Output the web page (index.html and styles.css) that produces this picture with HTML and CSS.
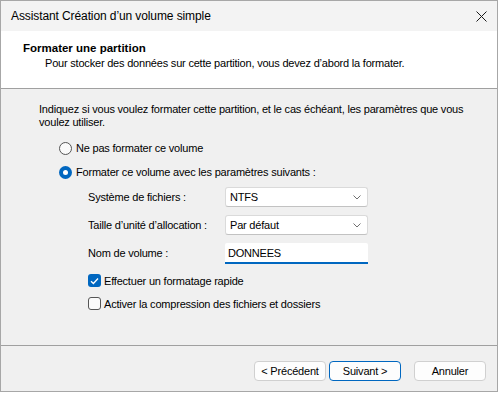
FILE: index.html
```html
<!DOCTYPE html>
<html lang="fr">
<head>
<meta charset="utf-8">
<link rel="stylesheet" href="styles.css">
</head>
<body>
<div class="window">
  <div class="titlebar">
    <span class="title">Assistant Création d’un volume simple</span>
    <svg class="close" width="11" height="11" viewBox="0 0 11 11"><path d="M0.5 0.5L10.5 10.5M10.5 0.5L0.5 10.5" stroke="#1a1a1a" stroke-width="1" fill="none"/></svg>
  </div>
  <div class="header">
    <div class="h-title">Formater une partition</div>
    <div class="h-sub">Pour stocker des données sur cette partition, vous devez d’abord la formater.</div>
  </div>
  <div class="content">
    <p class="intro">Indiquez si vous voulez formater cette partition, et le cas échéant, les paramètres que vous voulez utiliser.</p>
    <div class="radio-row first"><span class="radio"></span><span>Ne pas formater ce volume</span></div>
    <div class="radio-row"><span class="radio on"></span><span>Formater ce volume avec les paramètres suivants :</span></div>
    <div class="fields">
      <div class="field"><span class="label">Système de fichiers :</span><div class="select"><span>NTFS</span><svg width="8" height="5" viewBox="0 0 8 5"><path d="M0.5 0.5L4 4L7.5 0.5" stroke="#707070" fill="none"/></svg></div></div>
      <div class="field"><span class="label">Taille d’unité d’allocation :</span><div class="select"><span>Par défaut</span><svg width="8" height="5" viewBox="0 0 8 5"><path d="M0.5 0.5L4 4L7.5 0.5" stroke="#707070" fill="none"/></svg></div></div>
      <div class="field"><span class="label">Nom de volume :</span><div class="input">DONNEES</div></div>
    </div>
    <div class="checks">
      <div class="check-row"><span class="check on"><svg width="9" height="8" viewBox="0 0 9 8"><path d="M1 4.2L3.4 6.5L8 1.5" stroke="#fff" stroke-width="1.3" fill="none"/></svg></span><span>Effectuer un formatage rapide</span></div>
      <div class="check-row"><span class="check"></span><span>Activer la compression des fichiers et dossiers</span></div>
    </div>
  </div>
  <div class="footer">
    <button class="btn">&lt; Précédent</button>
    <button class="btn primary">Suivant &gt;</button>
    <button class="btn cancel">Annuler</button>
  </div>
</div>
</body>
</html>
```
FILE: styles.css
```css
* { box-sizing: border-box; }
html, body { margin: 0; padding: 0; background: #ffffff; }
body {
  font-family: "Liberation Sans", Arial, sans-serif;
  font-size: 11px;
  letter-spacing: -0.2px;
  color: #000;
  width: 499px;
  height: 393px;
  overflow: hidden;
}
.window {
  width: 498px;
  height: 392px;
  border: 1px solid #a7a7a7;
  background: #f0f0f0;
  display: flex;
  flex-direction: column;
}
.titlebar {
  height: 30px;
  flex: none;
  background: #f3f3f3;
  display: flex;
  align-items: center;
  justify-content: space-between;
  padding: 0 10px 0 10px;
}
.title { font-size: 12px; letter-spacing: -0.1px; }
.header {
  height: 58px;
  flex: none;
  background: #ffffff;
  border-bottom: 1px solid #a0a0a0;
  padding: 10px 0 0 22px;
}
.h-title { font-weight: bold; font-size: 11.5px; letter-spacing: 0; line-height: 14px; }
.h-sub { padding-left: 22px; margin-top: 1px; line-height: 15px; color: #000; }
.content {
  flex: 1;
  padding: 14px 0 0 38px;
  border-bottom: 1px solid #a0a0a0;
}
.intro { margin: 0; width: 440px; line-height: 13px; }
.radio-row { display: flex; align-items: center; gap: 4px; margin-left: 20px; height: 14px; }
.radio-row.first { margin-top: 12px; }
.radio-row + .radio-row { margin-top: 10px; }
.radio {
  width: 13px; height: 13px; border-radius: 50%;
  border: 1px solid #555; background: #fafafa; flex: none;
}
.radio.on { border: none; background: #0067c0; position: relative; }
.radio.on::after {
  content: ""; position: absolute; left: 4px; top: 4px; width: 5px; height: 5px;
  border-radius: 50%; background: #fff;
}
.fields { margin-left: 49px; margin-top: 8px; display: flex; flex-direction: column; gap: 7px; }
.field { display: flex; align-items: flex-start; height: 21px; }
.label { width: 137px; line-height: 20px; }
.select {
  width: 143px; height: 20px; background: #fff;
  border: 1px solid #dadada; border-bottom-color: #c2c2c2; border-radius: 3px;
  display: flex; align-items: center; justify-content: space-between; padding: 0 6px 0 4px;
}
.input {
  width: 143px; height: 21px; background: #fff;
  border-bottom: 2px solid #0067c0; border-radius: 2px 2px 0 0;
  display: flex; align-items: center; padding: 1px 3px 0 3px;
}
.checks { margin-left: 49px; margin-top: 10px; display: flex; flex-direction: column; gap: 10px; }
.check-row { display: flex; align-items: center; gap: 3px; height: 13px; }
.check {
  width: 13px; height: 13px; border-radius: 3px; border: 1px solid #555; background: #fafafa; flex: none;
  display: flex; align-items: center; justify-content: center;
}
.check.on { border: none; background: #0067c0; }
.footer {
  height: 45px;
  flex: none;
  display: flex;
  align-items: flex-start;
  padding: 15px 0 0 253px;
}
.btn {
  font-family: inherit; font-size: 11px; letter-spacing: -0.2px; color: #000;
  width: 72px; height: 20px; padding: 0;
  background: #fdfdfd; border: 1px solid #d0d0d0; border-radius: 4px;
}
.btn.primary { margin-left: 3px; border-color: #0067c0; }
.btn.cancel { margin-left: 13px; }
```
